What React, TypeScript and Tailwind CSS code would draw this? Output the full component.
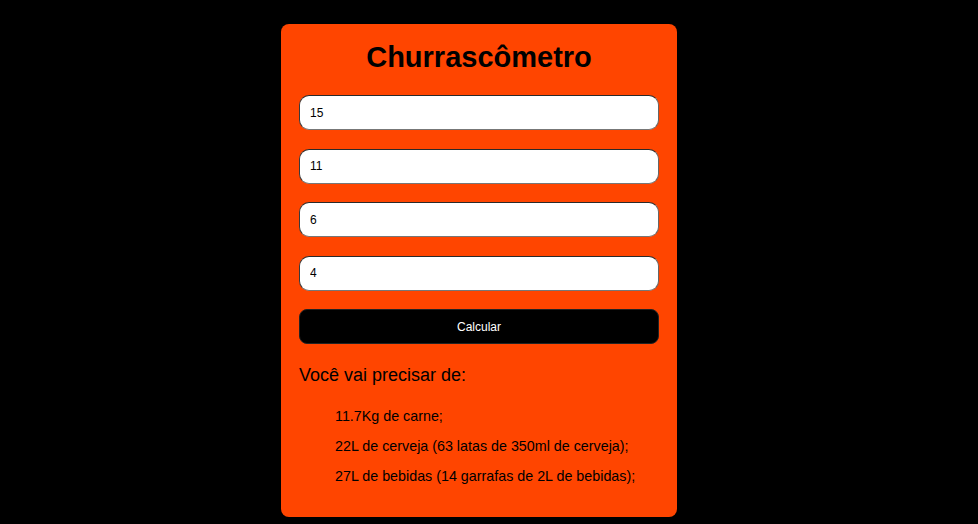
import React from "react";

export default function App() {
  const values = ["15", "11", "6", "4"];
  const items = [
    "11.7Kg de carne;",
    "22L de cerveja (63 latas de 350ml de cerveja);",
    "27L de bebidas (14 garrafas de 2L de bebidas);",
  ];
  return (
    <div
      className="min-h-[524px] w-full bg-black flex justify-center pr-[20px] pt-[24px]"
      style={{ fontFamily: '"Liberation Sans", Arial, sans-serif' }}
    >
      <div className="w-[396px] h-[493px] bg-[#ff4500] rounded-[8px] px-[18px] pt-[17px] flex flex-col">
        <h1 className="text-[29px] leading-[32px] font-bold text-black text-center">
          Churrascômetro
        </h1>
        <div className="mt-[22px] flex flex-col gap-[18.5px]">
          {values.map((v, i) => (
            <input
              key={i}
              readOnly
              value={v}
              className="h-[35px] w-full bg-white rounded-[10px] border border-t-[#2a2a2a] border-l-[#3a3a3a] border-b-[#777] border-r-[#666] px-[10px] text-[12px] text-black outline-none"
            />
          ))}
          <button className="h-[35px] w-full bg-black rounded-[8px] border border-[#222] text-white text-[12px]">
            Calcular
          </button>
        </div>
        <p className="mt-[21px] text-[18px] leading-[21px] text-black">
          Você vai precisar de:
        </p>
        <ul className="mt-[21.5px] pl-[36px] flex flex-col gap-[14px]">
          {items.map((t, i) => (
            <li key={i} className="text-[14.3px] leading-[16px] text-black">
              {t}
            </li>
          ))}
        </ul>
      </div>
    </div>
  );
}
